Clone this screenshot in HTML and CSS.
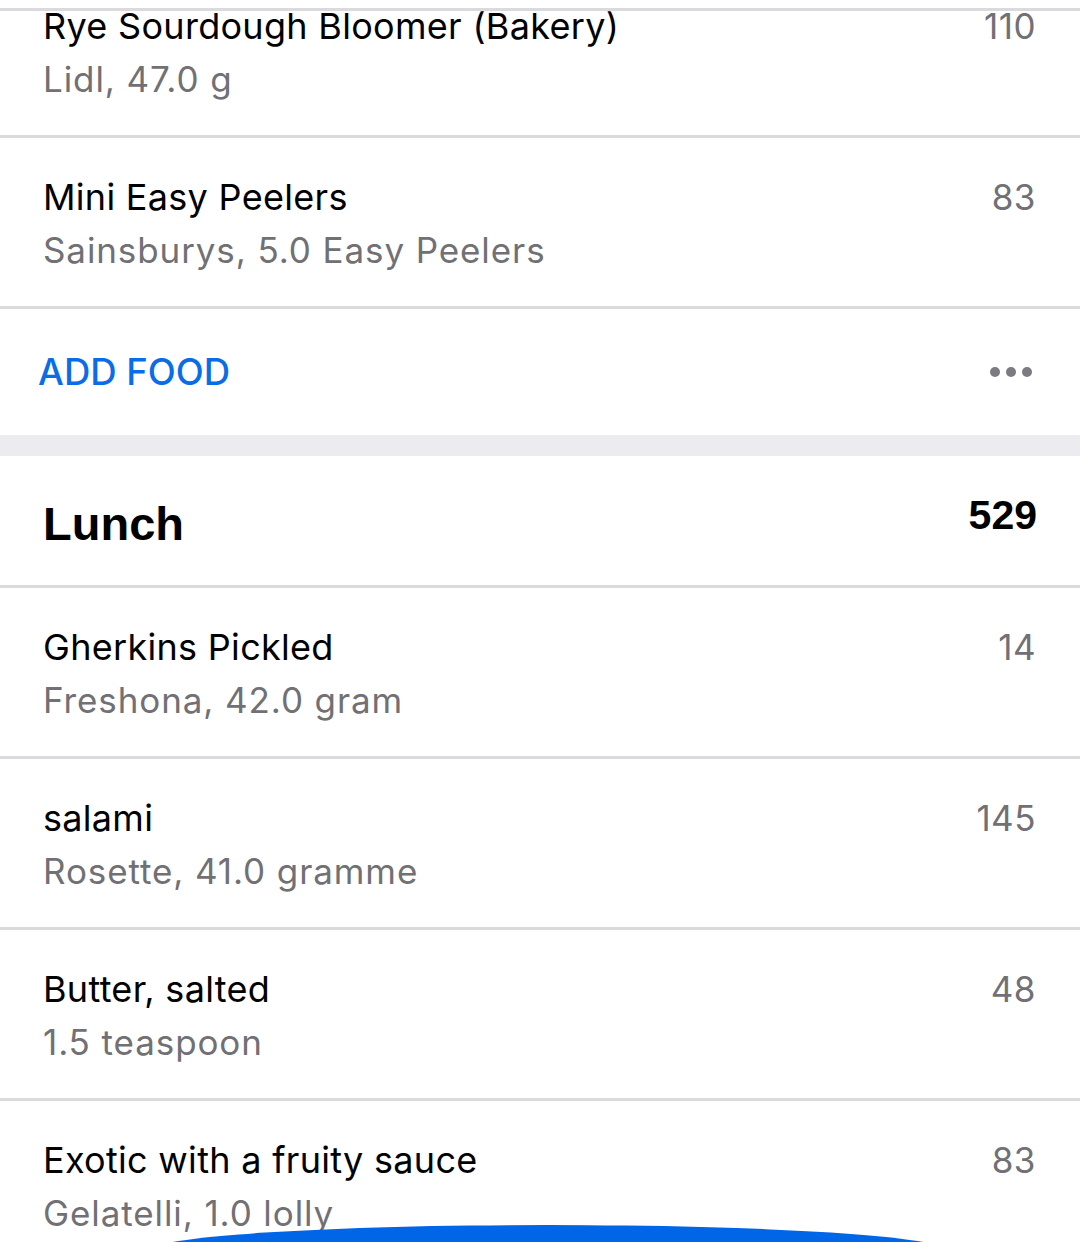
FILE: index.html
```html
<!DOCTYPE html>
<html>
  <head>
    <title>Diary</title>
    <link rel="stylesheet" href="styles.css">
  </head>
  <body>
    <div class="screen">
      <div class="topline"></div>
      <div class="list list-scrolled">
        <div class="row">
          <div class="info">
            <div class="name">Rye Sourdough Bloomer (Bakery)</div>
            <div class="meta">Lidl, 47.0 g</div>
          </div>
          <div class="kcal">110</div>
        </div>
        <div class="row">
          <div class="info">
            <div class="name">Mini Easy Peelers</div>
            <div class="meta">Sainsburys, 5.0 Easy Peelers</div>
          </div>
          <div class="kcal">83</div>
        </div>
        <div class="row add-row">
          <span class="add-food">ADD FOOD</span>
          <span class="more"><i></i><i></i><i></i></span>
        </div>
      </div>

      <div class="gap"></div>

      <div class="list">
        <div class="meal-header">
          <span class="meal-name">Lunch</span>
          <span class="meal-total">529</span>
        </div>
        <div class="row">
          <div class="info">
            <div class="name">Gherkins Pickled</div>
            <div class="meta">Freshona, 42.0 gram</div>
          </div>
          <div class="kcal">14</div>
        </div>
        <div class="row">
          <div class="info">
            <div class="name">salami</div>
            <div class="meta">Rosette, 41.0 gramme</div>
          </div>
          <div class="kcal">145</div>
        </div>
        <div class="row">
          <div class="info">
            <div class="name">Butter, salted</div>
            <div class="meta">1.5 teaspoon</div>
          </div>
          <div class="kcal">48</div>
        </div>
        <div class="row">
          <div class="info">
            <div class="name">Exotic with a fruity sauce</div>
            <div class="meta">Gelatelli, 1.0 lolly</div>
          </div>
          <div class="kcal">83</div>
        </div>
      </div>

      <div class="fab"></div>
    </div>
  </body>
</html>
```
FILE: styles.css
```css
body { margin: 0; background: #fff; font-family: Inter, "Noto Sans", sans-serif; }

.screen { position: relative; width: 1080px; height: 1242px; overflow: hidden; background: #fff; }

/* hairline of the nav bar, content scrolls under it */
.topline { position: absolute; top: 8px; left: 0; right: 0; height: 3px; background: #d9d9de; z-index: 2; }

.list-scrolled { margin-top: -36px; }

.row {
  display: flex;
  justify-content: space-between;
  align-items: flex-start;
  padding: 33px 44px 29px 43px;
  border-top: 3px solid #d9d9de;
}

.name { font-size: 36px; line-height: 53px; letter-spacing: 0.3px; color: #000; }
.meta { font-size: 35px; line-height: 53px; letter-spacing: 0.9px; color: #707075; }
.kcal { font-size: 35px; line-height: 53px; letter-spacing: 0.5px; color: #707075; }

.add-row {
  height: 129px;
  box-sizing: border-box;
  padding: 0 48px 0 38px;
  align-items: center;
}
.add-food { font-size: 36.5px; font-weight: 500; color: #0a6de8; }
.more { display: flex; gap: 6px; }
.more i { width: 10px; height: 10px; border-radius: 50%; background: #7b7b80; }

.gap { height: 21px; background: #ebebf0; }

.meal-header {
  display: flex;
  justify-content: space-between;
  align-items: center;
  height: 129px;
  box-sizing: border-box;
  padding: 5px 43px 0 43px;
  font-family: "Liberation Sans", Arial, sans-serif;
  font-weight: bold;
  color: #000;
}
.meal-name { font-size: 47px; }
.meal-total { font-size: 41px; margin-bottom: 16px; }

.fab {
  position: absolute;
  left: 148px;
  top: 1225px;
  width: 800px;
  height: 52px;
  border-radius: 50%;
  background: #0066e8;
  z-index: 3;
}
```
